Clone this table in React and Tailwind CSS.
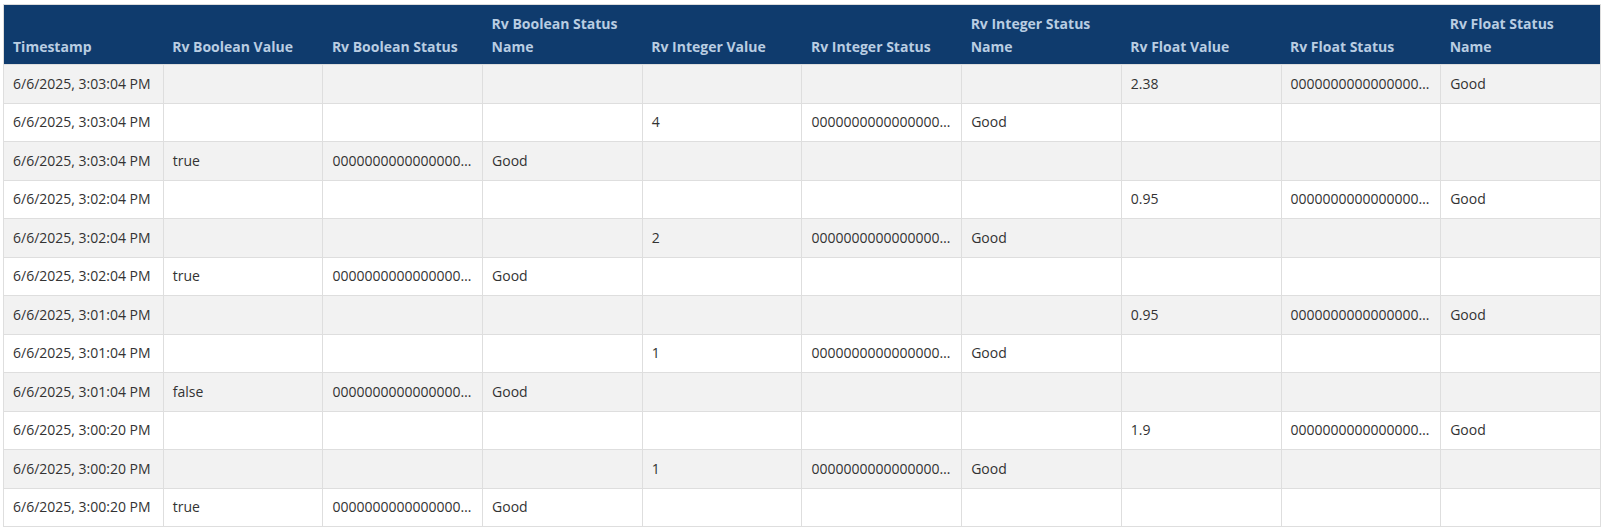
import React from "react";

const headers = [
  "Timestamp",
  "Rv Boolean Value",
  "Rv Boolean Status",
  "Rv Boolean Status Name",
  "Rv Integer Value",
  "Rv Integer Status",
  "Rv Integer Status Name",
  "Rv Float Value",
  "Rv Float Status",
  "Rv Float Status Name",
];

const Z = "00000000000000000000000000000000";

const rows = [
  ["6/6/2025, 3:03:04 PM", "", "", "", "", "", "", "2.38", Z, "Good"],
  ["6/6/2025, 3:03:04 PM", "", "", "", "4", Z, "Good", "", "", ""],
  ["6/6/2025, 3:03:04 PM", "true", Z, "Good", "", "", "", "", "", ""],
  ["6/6/2025, 3:02:04 PM", "", "", "", "", "", "", "0.95", Z, "Good"],
  ["6/6/2025, 3:02:04 PM", "", "", "", "2", Z, "Good", "", "", ""],
  ["6/6/2025, 3:02:04 PM", "true", Z, "Good", "", "", "", "", "", ""],
  ["6/6/2025, 3:01:04 PM", "", "", "", "", "", "", "0.95", Z, "Good"],
  ["6/6/2025, 3:01:04 PM", "", "", "", "1", Z, "Good", "", "", ""],
  ["6/6/2025, 3:01:04 PM", "false", Z, "Good", "", "", "", "", "", ""],
  ["6/6/2025, 3:00:20 PM", "", "", "", "", "", "", "1.9", Z, "Good"],
  ["6/6/2025, 3:00:20 PM", "", "", "", "1", Z, "Good", "", "", ""],
  ["6/6/2025, 3:00:20 PM", "true", Z, "Good", "", "", "", "", "", ""],
];

export default function App() {
  return (
    <div
      className="bg-white pl-[3px] pt-[4px] pr-[4px]"
      style={{ fontFamily: '"Open Sans", "Noto Sans", Arial, sans-serif' }}
    >
      <table className="w-full table-fixed border-collapse border border-[#dcdcdc] text-[14px] text-[#333333]">
        <thead>
          <tr className="h-[60px] bg-[#0f3b6d]">
            {headers.map((h) => (
              <th
                key={h}
                className="align-bottom text-left font-bold text-[#b9cde2] text-[14px] leading-[23px] pl-[9px] pr-[12px] pb-[6px]"
              >
                {h}
              </th>
            ))}
          </tr>
        </thead>
        <tbody>
          {rows.map((r, i) => (
            <tr
              key={i}
              className={`h-[38.5px] ${i % 2 === 0 ? "bg-[#f2f2f2]" : "bg-white"}`}
            >
              {r.map((c, j) => (
                <td
                  key={j}
                  className="border border-[#dedede] px-[9px] py-0 leading-[20px] truncate whitespace-nowrap overflow-hidden"
                >
                  {c}
                </td>
              ))}
            </tr>
          ))}
        </tbody>
      </table>
    </div>
  );
}
